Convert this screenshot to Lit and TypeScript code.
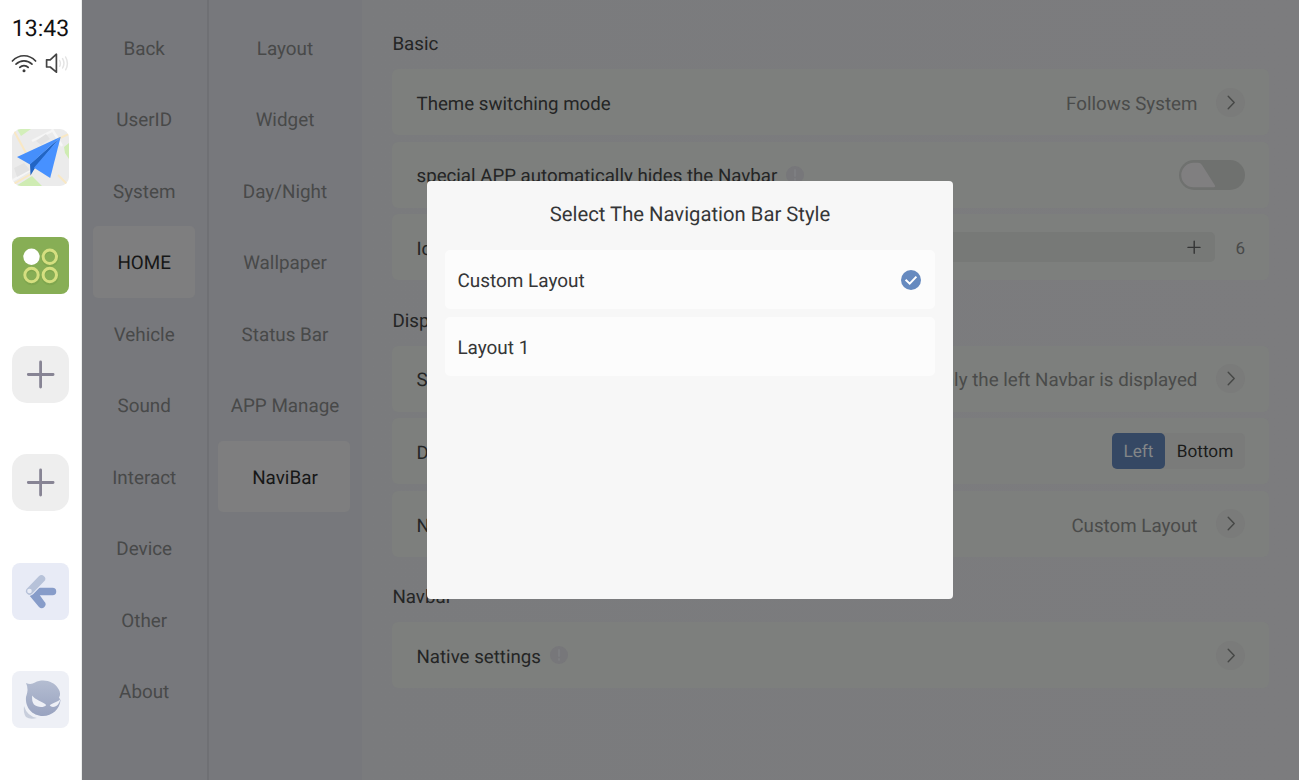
import { LitElement, html, css } from "lit";
import { customElement } from "lit/decorators.js";

const chevron = html`<span class="chev"><svg width="29" height="29" viewBox="0 0 29 29" fill="none" stroke="#464746" stroke-width="1.4" stroke-linecap="round" stroke-linejoin="round"><path d="M12.2 8.3L18.2 14.5L12.2 20.7"/></svg></span>`;

const info = html`<svg class="info" width="18" height="18" viewBox="0 0 18 18"><circle cx="9" cy="9" r="9" fill="#77777a"/><path d="M9 4v6M9 13.2v.6" stroke="#7d7e81" stroke-width="2.2" stroke-linecap="round"/></svg>`;

const plusTile = html`<svg class="tile" viewBox="0 0 57 57"><rect width="57" height="57" rx="15" fill="#eeeeee"/><path d="M16.3 28.5h24.8M28.6 16v25" stroke="#878494" stroke-width="2.8" stroke-linecap="round"/></svg>`;

@customElement("app-root")
export class AppRoot extends LitElement {
  static styles = css`
    :host { display: block; width: 1299px; height: 780px; overflow: hidden; position: relative; font-family: Roboto, sans-serif; text-rendering: geometricPrecision; background: #7b7b7d; color: #242525; }
    * { box-sizing: border-box; }
    .screen { display: flex; height: 780px; }
    .dock { width: 82px; background: #fff; display: flex; flex-direction: column; align-items: center; padding-top: 15px; border-right: 1px solid #eceeed; }
    .time { font-size: 23px; line-height: 28px; color: #111; height: 28px; }
    .status { display: flex; height: 25px; margin-top: 8px; gap: 8px; margin-right: 2px; }
    .tiles { display: flex; flex-direction: column; gap: 51.4px; margin-top: 53px; }
    .tile { display: block; width: 57px; height: 57px; }
    .menu { background: #77787c; padding-top: 11.8px; display: flex; flex-direction: column; align-items: center; font-size: 18.85px; color: #484949; }
    .main-menu { width: 127px; border-right: 2px solid #6f7074; }
    .sub-menu { width: 153px; }
    .item { height: 71.5px; display: flex; align-items: center; justify-content: center; border-radius: 5px; padding-top: 2.4px; }
    .main-menu .item { width: 102px; margin-right: 1.6px; padding-left: 1px; }
    .sub-menu .item { width: 132px; margin-right: 3px; padding-left: 2px; }
    .item.on { background: #7e7e7f; color: #161717; }
    .content { flex: 1; padding: 31px 30px 0 30px; font-size: 18.75px; background: linear-gradient(90deg, #7a7b7d, #7c7c7e); }
    .head { height: 38px; line-height: 27px; padding-left: .4px; }
    .group + .head { margin-top: 27.2px; }
    .group { display: flex; flex-direction: column; gap: 6.7px; }
    .card { height: 66px; border-radius: 6px; background: #7d7f7d; display: flex; align-items: center; padding: 0 24px; }
    .label { padding-top: 3.4px; padding-left: .5px; font-size: 18.7px; white-space: nowrap; }
    .info { margin-left: 9px; }
    .grow { flex: 1; }
    .value { color: #4a4b4a; margin-right: 18.6px; padding-top: 3.4px; white-space: nowrap; }
    .chev { width: 29px; height: 29px; border-radius: 50%; background: #7a7b7a; }
    .chev svg { display: block; }
    .bar { width: 510px; height: 30px; border-radius: 5px; background: #777977; display: flex; align-items: center; justify-content: space-between; padding: 0 14px; }
    .num { width: 30px; text-align: right; font-size: 17px; color: #484949; padding-top: 3px; }
    .seg { display: flex; width: 133px; height: 36px; border-radius: 5px; background: #7a7b7a; font-size: 17.2px; line-height: 38px; text-align: center; }
    .seg .left { width: 53px; border-radius: 5px; background: #354864; color: #838688; height: 36px; }
    .seg .bottom { flex: 1; color: #1a1b1b; height: 36px; }
    .modal { position: absolute; left: 427px; top: 181px; width: 526px; height: 418px; border-radius: 4px; background: #f7f7f7; padding: 19px 18px 0; display: flex; flex-direction: column; color: #353637; }
    .title { font-size: 20.25px; line-height: 28px; text-align: center; height: 50.4px; }
    .option { height: 59px; border-radius: 5px; background: #fcfcfc; display: flex; align-items: center; justify-content: space-between; padding: 0 14px 0 12.4px; font-size: 18.95px; margin-bottom: 8px; }
    .option span { padding-top: 2px; }
  `;

  renderDock() {
    return html`
      <div class="dock">
        <div class="time">13:43</div>
        <div class="status">
          <svg width="26" height="25" viewBox="0 0 26 25" fill="none" stroke="#3c3c3c" stroke-width="1.7" stroke-linecap="round"><path d="M1.4 10C8 3 18 3 24.6 10M5 13.2C9.5 8.8 16.5 8.8 21 13.2M8.8 16.4C11 14 15 14 17.2 16.4"/><circle cx="13" cy="19.8" r="1.5" fill="#3c3c3c" stroke="none"/></svg>
          <svg width="24" height="25" viewBox="0 0 24 25" fill="none" stroke-width="1.7" stroke-linejoin="round" stroke-linecap="round"><path d="M1.6 8.8H5.2L11.4 3.2V21.2L5.2 16H1.6Z" stroke="#444"/><path d="M14.6 9.5q1.6 2.9 0 5.8M17.6 7.6q2.7 4.7 0 9.4M20.6 6q3.6 6.4 0 12.8" stroke="#e4e4e4" stroke-width="1.5"/></svg>
        </div>
        <div class="tiles">
          <svg class="tile" viewBox="0 0 57 57">
            <defs><clipPath id="round"><rect width="57" height="57" rx="9"/></clipPath></defs>
            <g clip-path="url(#round)"><rect width="57" height="57" fill="#ebebeb"/><path d="M5 0H19L9 7Z" fill="#d3efba"/><path d="M52 18L57 14V30L53 24ZM4 57L20 47L30 57Z" fill="#cfecb3"/><path d="M0 52L20 40M40 0L50 17M40 2L20 12" stroke="#f6f6f6" stroke-width="2.5"/><path d="M2 2L14 24M0 56L19 45M46 10L57 5M46 46L57 57" stroke="#f9e8c4" stroke-width="2"/><path d="M2 39L12 34L18 41L5 48ZM24 12L34 5L38 10L29 16Z" fill="#e2e2e2"/>
            <path d="M18 35L48.5 8L23 39L18.5 46.5Z" fill="#2265c4"/><path d="M5 28L48.7 7.8L18 35.5Z" fill="#468ffb"/><path d="M48.7 7.8L38.2 49L22 38.8Z" fill="#4791ff"/></g>
          </svg>
          <svg class="tile" viewBox="0 0 57 57"><rect width="57" height="57" rx="8" fill="#87ae55"/><g fill="none" stroke="#6f9742" stroke-opacity=".35" stroke-width="3.5"><circle cx="38" cy="21" r="7"/><circle cx="20" cy="39.5" r="7"/><circle cx="38" cy="39.5" r="7"/></g><circle cx="19.5" cy="19.7" r="8.2" fill="#fff"/><g fill="none" stroke="#d5df80" stroke-width="3"><circle cx="37.8" cy="19.7" r="6.7"/><circle cx="19.5" cy="38" r="6.7"/><circle cx="37.8" cy="38" r="6.7"/></g></svg>
          ${plusTile}${plusTile}
          <svg class="tile" viewBox="0 0 57 57"><rect width="57" height="57" rx="8" fill="#e8ebf6"/><path d="M17.8 33L26 24.7H40.5A3.7 3.7 0 0 1 40.5 32.2H27.8L32.3 38.5A3.7 3.7 0 0 1 27 44Z" fill="#879cc9"/><path d="M17.7 28L29.5 16" stroke="#e8ebf6" stroke-width="9.5" stroke-linecap="round"/><path d="M17.7 28L29.5 15.8" stroke="#b7c2d9" stroke-width="7.4" stroke-linecap="round"/><circle cx="17.5" cy="28" r="2.3" fill="#e8ebf6"/></svg>
          <svg class="tile" viewBox="0 0 57 57"><defs><linearGradient id="face" x1="0" y1="0" x2="0" y2="1"><stop stop-color="#b4bdd1"/><stop offset="1" stop-color="#99a3c0"/></linearGradient></defs><rect width="57" height="57" rx="8" fill="#eef0f6"/><path d="M14 12Q19 14 23 11.5C31 7.5 42 10 46.5 18C48.5 21 48.5 24.5 47 26.5L48.5 29C48 38 40 45 31 45C20 45 13 36 14 26Q17 18 14 12Z" fill="url(#face)"/><path d="M20.2 24.5C23 29 31 30.5 34.2 34C32 37 25 36.5 22 33.5Q19.5 30 20.2 24.5Z" fill="#eef0f6"/><path d="M48.5 27.5C47 31 40 32 37.8 34.3C39.5 37 44 36 46 33.5Q48 31 48.5 27.5Z" fill="#eef0f6"/><path d="M12 35Q15 45 25 47Q18 49 14 46Q11 42 12 35Z" fill="#c8cedc"/></svg>
        </div>
      </div>`;
  }

  renderMenu(cls: string, items: string[], active: string) {
    return html`<div class="menu ${cls}">${items.map((t) => html`<div class="item ${t === active ? "on" : ""}">${t}</div>`)}</div>`;
  }

  render() {
    return html`
      <div class="screen">
        ${this.renderDock()}
        ${this.renderMenu("main-menu", ["Back", "UserID", "System", "HOME", "Vehicle", "Sound", "Interact", "Device", "Other", "About"], "HOME")}
        ${this.renderMenu("sub-menu", ["Layout", "Widget", "Day/Night", "Wallpaper", "Status Bar", "APP Manage", "NaviBar"], "NaviBar")}
        <div class="content">
          <div class="head">Basic</div>
          <div class="group">
            <div class="card"><span class="label">Theme switching mode</span><span class="grow"></span><span class="value">Follows System</span>${chevron}</div>
            <div class="card"><span class="label">special APP automatically hides the Navbar</span>${info}<span class="grow"></span>
              <svg width="66" height="30" viewBox="0 0 66 30"><rect width="66" height="30" rx="15" fill="#6f716f"/><path d="M14.5 2.8H19Q21.5 2.8 23 5L36 25.5Q36.8 27.3 35 27.3H14.5A12.2 12.2 0 0 1 14.5 2.8Z" fill="#807f80"/></svg>
            </div>
            <div class="card"><span class="label">Icon</span><span class="grow"></span><div class="bar"><span></span><svg width="14" height="14" viewBox="0 0 14 14"><path d="M1 7.4h12M7.2 1.2v12" stroke="#343535" stroke-width="1.4" stroke-linecap="round"/></svg></div><span class="num">6</span></div>
          </div>
          <div class="head">Display</div>
          <div class="group">
            <div class="card"><span class="label">Show</span><span class="grow"></span><span class="value">Only the left Navbar is displayed</span>${chevron}</div>
            <div class="card"><span class="label">Display</span><span class="grow"></span><div class="seg"><span class="left">Left</span><span class="bottom">Bottom</span></div></div>
            <div class="card"><span class="label">Navbar</span><span class="grow"></span><span class="value">Custom Layout</span>${chevron}</div>
          </div>
          <div class="head">Navbar</div>
          <div class="group"><div class="card"><span class="label">Native settings</span>${info}<span class="grow"></span>${chevron}</div></div>
        </div>
      </div>
      <div class="modal">
        <div class="title">Select The Navigation Bar Style</div>
        <div class="option"><span>Custom Layout</span><svg width="20" height="20" viewBox="0 0 20 20"><circle cx="10" cy="10" r="10" fill="#668abf"/><path d="M4.6 9.7L8.7 13.6L15.4 6.6" fill="none" stroke="#fff" stroke-width="2"/></svg></div>
        <div class="option"><span>Layout 1</span></div>
      </div>`;
  }
}
